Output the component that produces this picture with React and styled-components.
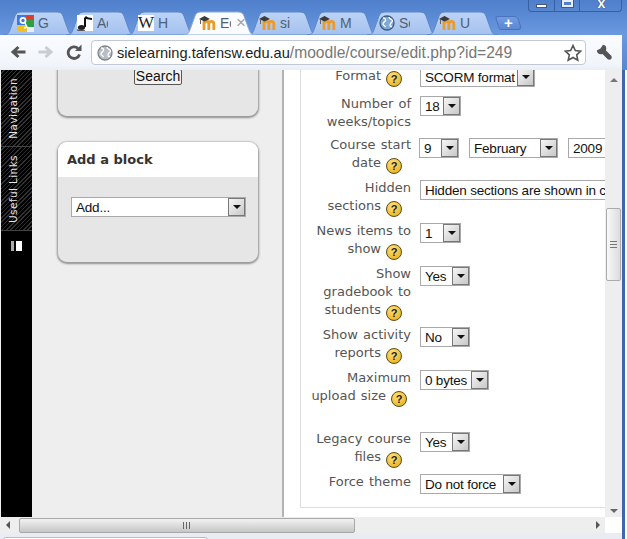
import React from "react";
import styled, { createGlobalStyle } from "styled-components";

const Global = createGlobalStyle`
  html, body { margin: 0; padding: 0; background: #fff; }
  * { box-sizing: border-box; }
`;

const Win = styled.div`
  width: 627px; height: 539px; overflow: hidden;
  display: flex; flex-direction: column;
  background: linear-gradient(#4f7ecb, #6a99e0 35px, #5a86cc 70px, #3f67ae);
  font-family: "Liberation Sans", Arial, sans-serif;
`;
const TabStrip = styled.div`
  position: relative; height: 35px; flex: none;
  display: flex; align-items: flex-end; padding-left: 3px;
`;
const WinControls = styled.div`
  position: absolute; top: 0; left: 528px; width: 94px; height: 12px;
  display: grid; grid-template-columns: 25px 25px 44px;
  border: 1px solid #36609f; border-top: 0; border-radius: 0 0 4px 4px;
`;
const WinBtn = styled.div`
  position: relative; overflow: hidden;
  display: flex; align-items: flex-start; justify-content: center;
  & + & { border-left: 1px solid #36609f; }
`;
const WinMin = styled.span`
  width: 11px; height: 4px; margin-top: 4px; background: #fff; border: 1px solid #44597a;
`;
const WinMax = styled.span`
  width: 11px; height: 7px; border: 2px solid #e8eefa; outline: 1px solid #44597a; outline-offset: 0;
`;
const WinX = styled.span`
  color: #fff; font-size: 14px; line-height: 7px; font-weight: bold; text-shadow: 0 0 1px #223;
`;
const TabWrap = styled.div`
  position: relative; height: 24px; flex: none;
  width: ${p => p.$w}px; margin-right: ${p => -p.$o}px;
  z-index: ${p => (p.$active ? 2 : 1)};
  display: flex; align-items: center; padding: 0 0 0 ${p => p.$pad}px; gap: 4px;
`;
const TabShape = styled.svg`
  position: absolute; left: 0; top: 0; width: 100%; height: 100%;
`;
const FavBox = styled.span`
  position: relative; width: 16px; height: 16px; flex: none; display: inline-flex;
  align-items: center; justify-content: center;
  background: #fff;
  font-family: "Liberation Serif", serif; font-size: 17px; color: #222; line-height: 16px;
`;
const TabTitle = styled.span`
  position: relative; font-size: 14px; color: #4f6073; width: ${p => p.$w}px;
  overflow: hidden; white-space: nowrap;
`;
const TabClose = styled.span`
  position: relative; color: #a2a2a2; font-size: 17px; line-height: 14px; margin-left: 1px;
`;
const NewTab = styled.div`
  position: relative; margin: 0 0 5px -1px; width: 23px; height: 14px; flex: none;
  border-radius: 3px 4px 4px 2px; transform: skewX(18deg);
  background: linear-gradient(#6f9ce2, #5c88d4); border: 1px solid #4a73bb;
  display: flex; align-items: center; justify-content: center;
`;
const NewTabPlus = styled.span`
  transform: skewX(-18deg); color: #fff; font-weight: bold; font-size: 15px; line-height: 12px;
`;

const Toolbar = styled.div`
  width: 622px; height: 35px; flex: none; display: flex; align-items: flex-start; padding: 5px 0 0 10px;
  background: linear-gradient(#fafcff, #f1f5fb 30px, #e9eef5);
`;
const NavIcon = styled.svg`
  width: 16px; height: 16px; flex: none; margin: 4px ${p => p.$mr}px 0 ${p => p.$ml || 0}px;
`;
const Omni = styled.div`
  width: 495px; height: 25px; flex: none; background: #fff;
  border: 1px solid #c2c9d4; border-radius: 4px;
  display: flex; align-items: center; padding: 0 3px 0 5px;
`;
const OmniText = styled.div`
  flex: 1; margin-left: 4px; font-size: 15.6px; color: #777; white-space: nowrap;
`;
const Host = styled.span` color: #222; font-size: 14.6px; `;

const PageRow = styled.div`
  height: 447px; flex: none; display: flex; overflow: hidden;
  background: #eee; padding-left: 1px;
`;
const Dock = styled.div`
  width: 31px; flex: none; background: #000; display: flex; flex-direction: column;
`;
const DockItem = styled.div`
  height: ${p => p.$h}px; flex: none; display: flex; align-items: center; justify-content: center;
  padding-right: 8px; border-bottom: 1px solid #444;
  background: repeating-linear-gradient(135deg, #000 0 2px, #303030 2px 3px);
`;
const DockText = styled.span`
  writing-mode: vertical-rl; transform: rotate(180deg);
  color: #e4e4e4; font-family: "DejaVu Sans", sans-serif; font-size: 10.5px; letter-spacing: .4px;
`;
const DockPause = styled.div`
  display: flex; gap: 2px; margin: 10px 0 0 10px;
`;
const PauseBar = styled.span`
  width: ${p => p.$w}px; height: 10px; background: ${p => p.$c};
`;
const LeftCol = styled.div`
  width: 252px; flex: none; padding: 0 0 0 26px; margin-top: -40px;
  border-right: 2px solid #b3b3b3;
  display: flex; flex-direction: column; gap: 26px;
`;
const Card = styled.div`
  width: 200px; height: ${p => p.$h}px; flex: none; border-radius: 9px; overflow: hidden;
  background: #e6e6e6;
  box-shadow: 0 0 2px #bbb, 0 1px 2px 1px #8d8d8d;
`;
const CardHead = styled.div`
  height: 35px; background: #fff; padding: 10px 9px 0;
  font: bold 13px "DejaVu Sans", sans-serif; color: #333;
`;
const SearchWrap = styled.div`
  display: flex; justify-content: center; padding-top: 39px;
`;
const SearchBtn = styled.div`
  width: 48px; height: 16px; border: 1px solid #555; border-radius: 2px;
  background: #f2f2f2; color: #111;
  font-size: 14px; line-height: 13px; text-align: center;
`;
const SelectBox = styled.div`
  flex: none; width: ${p => p.$w}px; height: 20px; margin: ${p => p.$m || 0};
  display: flex; align-items: center; overflow: hidden;
  background: #fff; border: 1px solid #a9a9a9;
  font-size: 13.5px; letter-spacing: -.2px; color: #111; padding-left: 4px; white-space: nowrap;
`;
const SelectText = styled.span` flex: 1; overflow: hidden; `;
const SelectArrow = styled.span`
  flex: none; width: 17px; height: 18px; display: flex; align-items: center; justify-content: center;
  background: linear-gradient(135deg, #f6f6f6, #c8c8c8); border: 1px solid #777;
  &::after {
    content: ""; border: 4px solid transparent; border-top: 4px solid #111; border-bottom: 0;
  }
`;
const Main = styled.div`
  width: 321px; flex: none; background: #fff; padding-left: 16px; overflow: hidden;
`;
const FormBox = styled.div`
  width: 320px; height: 442px; margin-top: -4px; padding: 0 0 0 9px;
  border-left: 1px solid #ddd; border-bottom: 1px solid #ddd;
  display: flex; flex-direction: column;
`;
const Row = styled.div`
  height: ${p => p.$h}px; flex: none; display: flex;
`;
const Label = styled.div`
  width: 101px; flex: none; text-align: right; white-space: nowrap; padding-top: 1px;
  font: 13px/18px "DejaVu Sans", sans-serif; color: #555; word-spacing: 1px;
`;
const Help = styled.span`
  display: inline-flex; align-items: center; justify-content: center; vertical-align: -3px;
  width: 16px; height: 16px; border-radius: 50%; margin: 0 ${p => p.$mr ?? 9}px 0 5px;
  background: radial-gradient(circle at 40% 30%, #ffe27a, #ecb62b 75%);
  border: 1px solid #5d4a12; color: #222; word-spacing: 0;
  font: bold 11px/14px "Liberation Sans", sans-serif;
`;
const Controls = styled.div`
  display: flex; gap: 10px; padding: ${p => p.$t ?? 2}px 0 0 ${p => p.$x ?? 9}px; flex: none;
`;
const VBar = styled.div`
  width: 17px; flex: none; background: #eee; display: flex; flex-direction: column; align-items: center;
`;
const VThumb = styled.div`
  width: 15px; height: 73px; margin-top: 126px; border: 1px solid #aaa; border-radius: 2px;
  background: linear-gradient(90deg, #f8f8f8, #dcdcdc);
  display: flex; align-items: center; justify-content: center;
`;
const VSpacer = styled.span` flex: 1; `;
const Caret = styled.span`
  width: 0; height: 0; border: 4px solid transparent;
  ${p => p.$d === "u" && "border-bottom: 4px solid #777; border-top: 0;"}
  ${p => p.$d === "d" && "border-top: 4px solid #666; border-bottom: 0;"}
  ${p => p.$d === "l" && "border-right: 4px solid #555; border-left: 0;"}
  ${p => p.$d === "r" && "border-left: 4px solid #555; border-right: 0;"}
  margin: ${p => p.$m || 0};
`;
const RightEdge = styled.div`
  width: 3px; flex: none; background: #3f67ae;
`;
const RightWhite = styled.div`
  flex: 1; background: #fff;
`;
const BottomRow = styled.div`
  display: flex; flex: none; height: ${p => p.$h}px;
`;
const HTrack = styled.div`
  width: 605px; flex: none; background: #eee; display: flex; align-items: center; padding-left: 6px;
`;
const HCorner = styled.div`
  width: 17px; flex: none; background: #fff;
`;
const HThumb = styled.div`
  width: 336px; height: 15px; margin-left: 9px; border: 1px solid #a8a8a8; border-radius: 2px;
  background: linear-gradient(#f2f2f2, #c6c6c6);
  display: flex; align-items: center; justify-content: center;
`;
const HFill = styled.div` flex: 1; display: flex; justify-content: flex-end; padding-right: 5px; `;
const Status = styled.div`
  width: 622px; flex: none; background: #e9edf3; padding: 4px 0 0 3px;
`;
const StatusTab = styled.div`
  width: 205px; height: 4px; background: #fff; border: 1px solid #bbb; border-radius: 3px 3px 0 0;
`;

const tabPath = (w, h = 24) =>
  `M0 ${h} C6 ${h} 6 ${h - 3} 8 ${h - 8} L12 5 C13 2 15 1 18 1 L${w - 18} 1 C${w - 15} 1 ${w - 13} 2 ${w - 12} 5 L${w - 8} ${h - 8} C${w - 6} ${h - 3} ${w - 6} ${h} ${w} ${h} Z`;

const FavSvg = styled.svg`
  position: relative; flex: none;
`;
const Moodle = () => (
  <FavSvg width="17" height="16" viewBox="0 0 17 16">
    <path d="M5 15V6M5 8.500C6.500 5.500 9.800 5.500 9.800 9v6M9.800 9c.5-3.500 5-3.500 5 0v6" fill="none" stroke="#e89c2c" strokeWidth="2.800" />
    <path d="M0 4L5.500 1 11 4 5.500 6.500z" fill="#3b3b3b" />
    <path d="M1.500 4.500V9" stroke="#666" />
  </FavSvg>
);
const Google = () => (
  <FavSvg width="17" height="17" viewBox="0 0 17 17">
    <rect width="9" height="10" fill="#3b78e7" />
    <rect x="9" width="8" height="5" fill="#d9402e" />
    <rect x="9" y="5" width="8" height="7" fill="#2f9e44" />
    <rect y="10" width="10" height="7" rx="3" fill="#f0c020" />
    <rect x="10" y="12" width="7" height="5" fill="#e8eef8" />
    <circle cx="6" cy="5.500" r="3.400" fill="#fff" />
    <circle cx="6" cy="5.500" r="1.700" fill="#3b78e7" />
    <path d="M8 8l2 4-3 1" fill="none" stroke="#fff" strokeWidth="1.500" />
  </FavSvg>
);
const Note = () => (
  <FavSvg width="16" height="16" viewBox="0 0 16 16">
    <rect width="16" height="16" fill="#fff" />
    <path d="M7 12V3l2-2c1 1 3 2 6 2v2c-2 0-4-1-6-1v8z" fill="#111" />
    <ellipse cx="4.500" cy="12.500" rx="3.600" ry="2.500" fill="#222" />
    <path d="M0 15l8 1" stroke="#555" strokeWidth="1.500" />
  </FavSvg>
);
const Globe = ({ size = 16, c1 = "#b9bec5", c2 = "#7f858d" }) => (
  <FavSvg width={size} height={size} viewBox="0 0 16 16">
    <circle cx="8" cy="8" r="7" fill={c1} stroke={c2} strokeWidth="1.300" />
    <path d="M4 3c2 0 3 1 2.500 2.500S4 7 4 9s2 1 2.500 3M10 2c0 2 3 2 3.500 3.500S11 8 11 10s1 2 2 1" fill="none" stroke="#fff" strokeWidth="1.300" />
  </FavSvg>
);

const tabs = [
  { w: 72, o: 9, pad: 14, icon: <Google />, t: "G", tw: 14 },
  { w: 70, o: 9, pad: 11, icon: <Note />, t: "Ac", tw: 11 },
  { w: 69, o: 13, pad: 11, icon: <FavBox>W</FavBox>, t: "H", tw: 16 },
  { w: 73, o: 9, pad: 16, icon: <Moodle />, t: "Ec", tw: 11, active: true },
  { w: 71, o: 11, pad: 12, icon: <Moodle />, t: "si", tw: 16 },
  { w: 71, o: 11, pad: 12, icon: <Moodle />, t: "M", tw: 16 },
  { w: 71, o: 11, pad: 12, icon: <Globe c1="#7fa8d6" c2="#3d5c86" />, t: "Sc", tw: 11 },
  { w: 71, o: 0, pad: 12, icon: <Moodle />, t: "U", tw: 16 },
];

const Tab = ({ w, o, pad, icon, t, tw, active }) => (
  <TabWrap $w={w} $o={o} $pad={pad} $active={active}>
    <TabShape viewBox={`0 0 ${w} 24`}>
      <defs>
        <linearGradient id="tabFill" x1="0" y1="0" x2="0" y2="1">
          <stop offset="0" stopColor="#bcd3f6" />
          <stop offset="1" stopColor="#a4c2ef" />
        </linearGradient>
      </defs>
      <path d={tabPath(w)} fill={active ? "#fafcff" : "url(#tabFill)"} stroke={active ? "#8aa7d6" : "#5d85c8"} />
    </TabShape>
    {icon}
    <TabTitle $w={tw}>{t}</TabTitle>
    {active && <TabClose>×</TabClose>}
  </TabWrap>
);

const Select = ({ w, children, m }) => (
  <SelectBox $w={w} $m={m}>
    <SelectText>{children}</SelectText>
    <SelectArrow />
  </SelectBox>
);

const App = () => (
  <Win>
    <Global />
    <TabStrip>
      {tabs.map((x, i) => <Tab key={i} {...x} />)}
      <NewTab><NewTabPlus>+</NewTabPlus></NewTab>
      <WinControls>
        <WinBtn><WinMin /></WinBtn>
        <WinBtn><WinMax /></WinBtn>
        <WinBtn><WinX>x</WinX></WinBtn>
      </WinControls>
    </TabStrip>
    <Toolbar>
      <NavIcon $mr={12} viewBox="0 0 16 16">
        <path d="M15.500 8H4M8.500 3L3 8l5.500 5" fill="none" stroke="#555" strokeWidth="3" />
      </NavIcon>
      <NavIcon $mr={12} viewBox="0 0 16 16">
        <path d="M.5 8H12M7.500 3L13 8l-5.500 5" fill="none" stroke="#c9ccd1" strokeWidth="3" />
      </NavIcon>
      <NavIcon $mr={9} viewBox="0 0 16 16">
        <path d="M13.500 10.500A5.800 5.800 0 1 1 12 4.500" fill="none" stroke="#555" strokeWidth="2.800" />
        <path d="M9 7H15.500V.5z" fill="#555" />
      </NavIcon>
      <Omni>
        <Globe />
        <OmniText><Host>sielearning.tafensw.edu.au</Host>/moodle/course/edit.php?id=249</OmniText>
        <svg width="18" height="18" viewBox="0 0 18 18">
          <path d="M9 1.500l2.300 5 5.400.6-4 3.700 1.100 5.400L9 13.500 4.200 16.200l1.100-5.400-4-3.700 5.400-.6z" fill="#fff" stroke="#555" strokeWidth="1.600" />
        </svg>
      </Omni>
      <NavIcon $ml={10} $mr={0} viewBox="0 0 16 16">
        <path d="M7 .8L4.500 4.500.8 6.500C1 9 3.500 11 6.500 10l5 5c1 1 3 1 3.500 0 1-1 1-2.500 0-3.500l-5-5c1-3.500-.5-5.500-3-5.700z" fill="#555" />
      </NavIcon>
    </Toolbar>
    <PageRow>
      <Dock>
        <DockItem $h={77}><DockText>Navigation</DockText></DockItem>
        <DockItem $h={84}><DockText>Useful Links</DockText></DockItem>
        <DockPause><PauseBar $w={3} $c="#aaa" /><PauseBar $w={6} $c="#fff" /></DockPause>
      </Dock>
      <LeftCol>
        <Card $h={86}>
          <SearchWrap><SearchBtn>Search</SearchBtn></SearchWrap>
        </Card>
        <Card $h={120}>
          <CardHead>Add a block</CardHead>
          <Select w={175} m="20px 0 0 13px">Add...</Select>
        </Card>
      </LeftCol>
      <Main>
        <FormBox>
          <Row $h={28}><Label>Format<Help>?</Help></Label><Controls $t={1}><Select w={115}>SCORM format</Select></Controls></Row>
          <Row $h={41}><Label>Number of<br />weeks/topics</Label><Controls><Select w={41}>18</Select></Controls></Row>
          <Row $h={43}><Label>Course start<br />date<Help>?</Help></Label><Controls $t={3} $x={8}><Select w={40}>9</Select><Select w={89}>February</Select><Select w={60}>2009</Select></Controls></Row>
          <Row $h={43}><Label>Hidden<br />sections<Help>?</Help></Label><Controls><Select w={300}>Hidden sections are shown in collapsed form</Select></Controls></Row>
          <Row $h={43}><Label>News items to<br />show<Help>?</Help></Label><Controls><Select w={41}>1</Select></Controls></Row>
          <Row $h={61}><Label>Show<br />gradebook to<br />students<Help>?</Help></Label><Controls><Select w={50}>Yes</Select></Controls></Row>
          <Row $h={43}><Label>Show activity<br />reports<Help>?</Help></Label><Controls><Select w={50}>No</Select></Controls></Row>
          <Row $h={61}><Label>Maximum<br />upload size<Help $mr={4}>?</Help></Label><Controls><Select w={69}>0 bytes</Select></Controls></Row>
          <Row $h={43}><Label>Legacy course<br />files<Help>?</Help></Label><Controls $t={3}><Select w={50}>Yes</Select></Controls></Row>
          <Row $h={36}><Label>Force theme</Label><Controls><Select w={101}>Do not force</Select></Controls></Row>
        </FormBox>
      </Main>
      <VBar>
        <Caret $d="u" $m="8px 0 0" />
        <VThumb>
          <svg width="7" height="7" viewBox="0 0 7 7"><path d="M0 .5h7M0 3.500h7M0 6.500h7" stroke="#777" /></svg>
        </VThumb>
        <VSpacer />
        <Caret $d="d" $m="0 0 4px" />
      </VBar>
      <RightEdge />
      <RightWhite />
    </PageRow>
    <BottomRow $h={16}>
      <HTrack>
        <Caret $d="l" />
        <HThumb>
          <svg width="8" height="7" viewBox="0 0 8 7"><path d="M.5 0v7M3.500 0v7M6.500 0v7" stroke="#666" /></svg>
        </HThumb>
        <HFill><Caret $d="r" /></HFill>
      </HTrack>
      <HCorner />
      <RightEdge />
      <RightWhite />
    </BottomRow>
    <BottomRow $h={6}>
      <Status><StatusTab /></Status>
      <RightEdge />
      <RightWhite />
    </BottomRow>
  </Win>
);

export default App;
